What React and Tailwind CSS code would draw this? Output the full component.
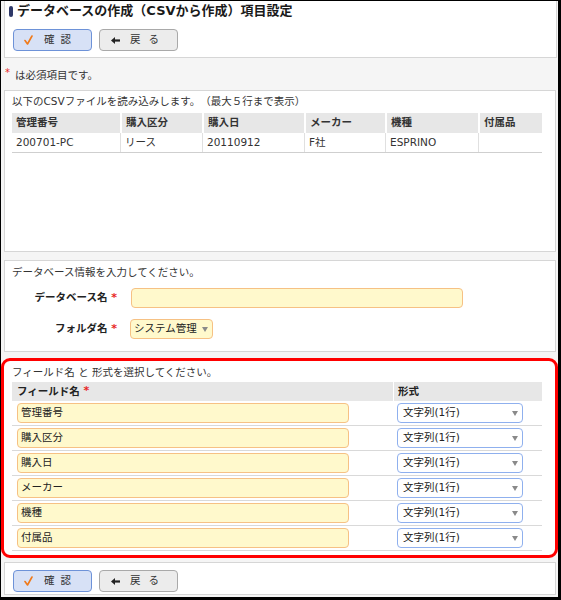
import React from "react";

const font = "font-['DejaVu_Sans','Noto_Sans_CJK_JP',sans-serif]";

function Check() {
  return (
    <svg width="9" height="10" viewBox="0 0 9 10" className="shrink-0">
      <path d="M1 5.5 L3.5 9 L8 1" fill="none" stroke="#f07a1a" strokeWidth="1.6" strokeLinecap="round" strokeLinejoin="round" />
    </svg>
  );
}

function Arrow() {
  return (
    <svg width="9" height="7" viewBox="0 0 9 7" className="shrink-0">
      <polygon points="0,3.5 4,0 4,7" fill="#222" />
      <rect x="3.5" y="2.4" width="5.5" height="2.2" fill="#222" />
    </svg>
  );
}

function Tri() {
  return (
    <svg width="6" height="5" viewBox="0 0 6 5" className="shrink-0">
      <polygon points="0,0 6,0 3,5" fill="#8a8a8a" />
    </svg>
  );
}

function Buttons() {
  return (
    <div className="flex gap-[7px] pl-[8px]">
      <div className="flex h-[22px] w-[79px] items-center rounded-[4px] border border-[#6d92d8] bg-[#d7e1f6]">
        <span className="ml-[10px] flex"><Check /></span>
        <span className="ml-[11px] text-[10.5px] tracking-[6px] text-[#333]">確認</span>
      </div>
      <div className="flex h-[22px] w-[79px] items-center rounded-[4px] border border-[#a9a9a9] bg-[#ececec]">
        <span className="ml-[11px] flex"><Arrow /></span>
        <span className="ml-[10px] text-[10.5px] tracking-[8px] text-[#333]">戻る</span>
      </div>
    </div>
  );
}

const Req = () => <span className="text-[#e8261f] text-[11px] font-bold">*</span>;

export default function App() {
  const fields = ["管理番号", "購入区分", "購入日", "メーカー", "機種", "付属品"];
  const cols = ["管理番号", "購入区分", "購入日", "メーカー", "機種", "付属品"];
  const vals = ["200701-PC", "リース", "20110912", "F社", "ESPRINO", ""];
  return (
    <div className={`${font} [text-spacing-trim:space-all] flex h-[600px] w-[561px] flex-col overflow-hidden border-b-[3px] border-l border-r-[3px] border-t border-black bg-[#f5f5f5] text-[10.5px] text-[#333]`}>
      {/* header panel */}
      <div className="ml-[3px] h-[57px] w-[553px] shrink-0 border-x border-b border-[#d6d6d6] bg-white">
        <div className="flex h-[20px] items-center">
          <span className="ml-[4px] h-[11px] w-[4px] rounded-full bg-[#2e3868]" />
          <span className="ml-[4px] text-[13px] font-bold text-[#1a1a1a]">データベースの作成（CSVから作成）項目設定</span>
        </div>
        <div className="mt-[8px]">
          <Buttons />
        </div>
      </div>

      {/* required note */}
      <div className="flex h-[32px] shrink-0 items-center pl-[4px] pt-[3px]">
        <span className="relative -top-[3px] text-[10px] text-[#e8261f]">*</span>
        <span className="ml-[5px]">は必須項目です。</span>
      </div>

      {/* csv preview panel */}
      <div className="ml-[3px] h-[162px] w-[552px] shrink-0 border border-[#d6d6d6] bg-white">
        <div className="flex h-[22px] items-center pl-[7px]">以下のCSVファイルを読み込みします。（最大５行まで表示）</div>
        <div className="ml-[7px] w-[530px]">
          <div className="grid h-[20px] grid-cols-[108px_82px_102px_81px_93px_64px] bg-[#e7e7e7]">
            {cols.map((c, i) => (
              <div key={c} className={`flex items-center pl-[4px] font-bold text-[#333] ${i > 0 ? "border-l-2 border-white" : ""}`}>{c}</div>
            ))}
          </div>
          <div className="grid h-[20px] grid-cols-[108px_82px_102px_81px_93px_64px] border-b border-[#cfcfcf]">
            {vals.map((v, i) => (
              <div key={i} className={`flex items-center pl-[4px] ${i > 0 ? "border-l border-[#e0e0e0]" : ""}`}>{v}</div>
            ))}
          </div>
        </div>
      </div>

      {/* database info panel */}
      <div className="ml-[3px] mt-[8px] h-[92px] w-[552px] shrink-0 border border-[#d6d6d6] bg-white">
        <div className="flex h-[24px] items-center pl-[7px]">データベース情報を入力してください。</div>
        <div className="mt-[3px] flex h-[20px] items-center">
          <div className="w-[115px] pr-[3px] text-right font-bold text-[#222]">データベース名 <Req /></div>
          <div className="ml-[11px] h-[20px] w-[332px] rounded-[4px] border border-[#f6c184] bg-[#fff9cc]" />
        </div>
        <div className="mt-[11px] flex h-[20px] items-center">
          <div className="w-[115px] pr-[3px] text-right font-bold text-[#222]">フォルダ名 <Req /></div>
          <div className="ml-[10px] flex h-[20px] w-[83px] items-center rounded-[4px] border border-[#f6c184] bg-[#fff9cc] pl-[3px] pr-[4px]">
            <span className="flex-1 text-[#222]">システム管理</span>
            <Tri />
          </div>
        </div>
      </div>

      {/* field panel (highlighted) */}
      <div className="mt-[6px] h-[200px] w-[557px] shrink-0 rounded-[9px] border-[3px] border-[#ff0000] bg-white">
        <div className="flex h-[21px] items-center pl-[8px] pt-[2px]">フィールド名 と 形式を選択してください。</div>
        <div className="ml-[8px] w-[530px]">
          <div className="grid h-[19px] grid-cols-[381px_149px] bg-[#e7e7e7]">
            <div className="flex items-center pl-[5px] font-bold text-[#222]">フィールド名&nbsp;<Req /></div>
            <div className="flex items-center border-l border-white pl-[4px] font-bold text-[#222]">形式</div>
          </div>
          {fields.map((f) => (
            <div key={f} className="grid h-[25px] grid-cols-[381px_149px] border-b border-[#d9d9d9]">
              <div className="flex items-center pl-[5px]">
                <div className="flex h-[20px] w-[332px] items-center rounded-[4px] border border-[#f6c184] bg-[#fff9cc] pl-[3px] text-[#222]">{f}</div>
              </div>
              <div className="flex items-center pl-[4px]">
                <div className="flex h-[20px] w-[126px] items-center rounded-[4px] border border-[#8fb0ee] bg-white pl-[5px] pr-[4px] text-[#222]">
                  <span className="flex-1">文字列(1行)</span>
                  <Tri />
                </div>
              </div>
            </div>
          ))}
        </div>
      </div>

      {/* bottom panel */}
      <div className="ml-[3px] mt-[4px] h-[33px] w-[552px] shrink-0 border border-[#d6d6d6] bg-white pt-[7px]">
        <Buttons />
      </div>
    </div>
  );
}
